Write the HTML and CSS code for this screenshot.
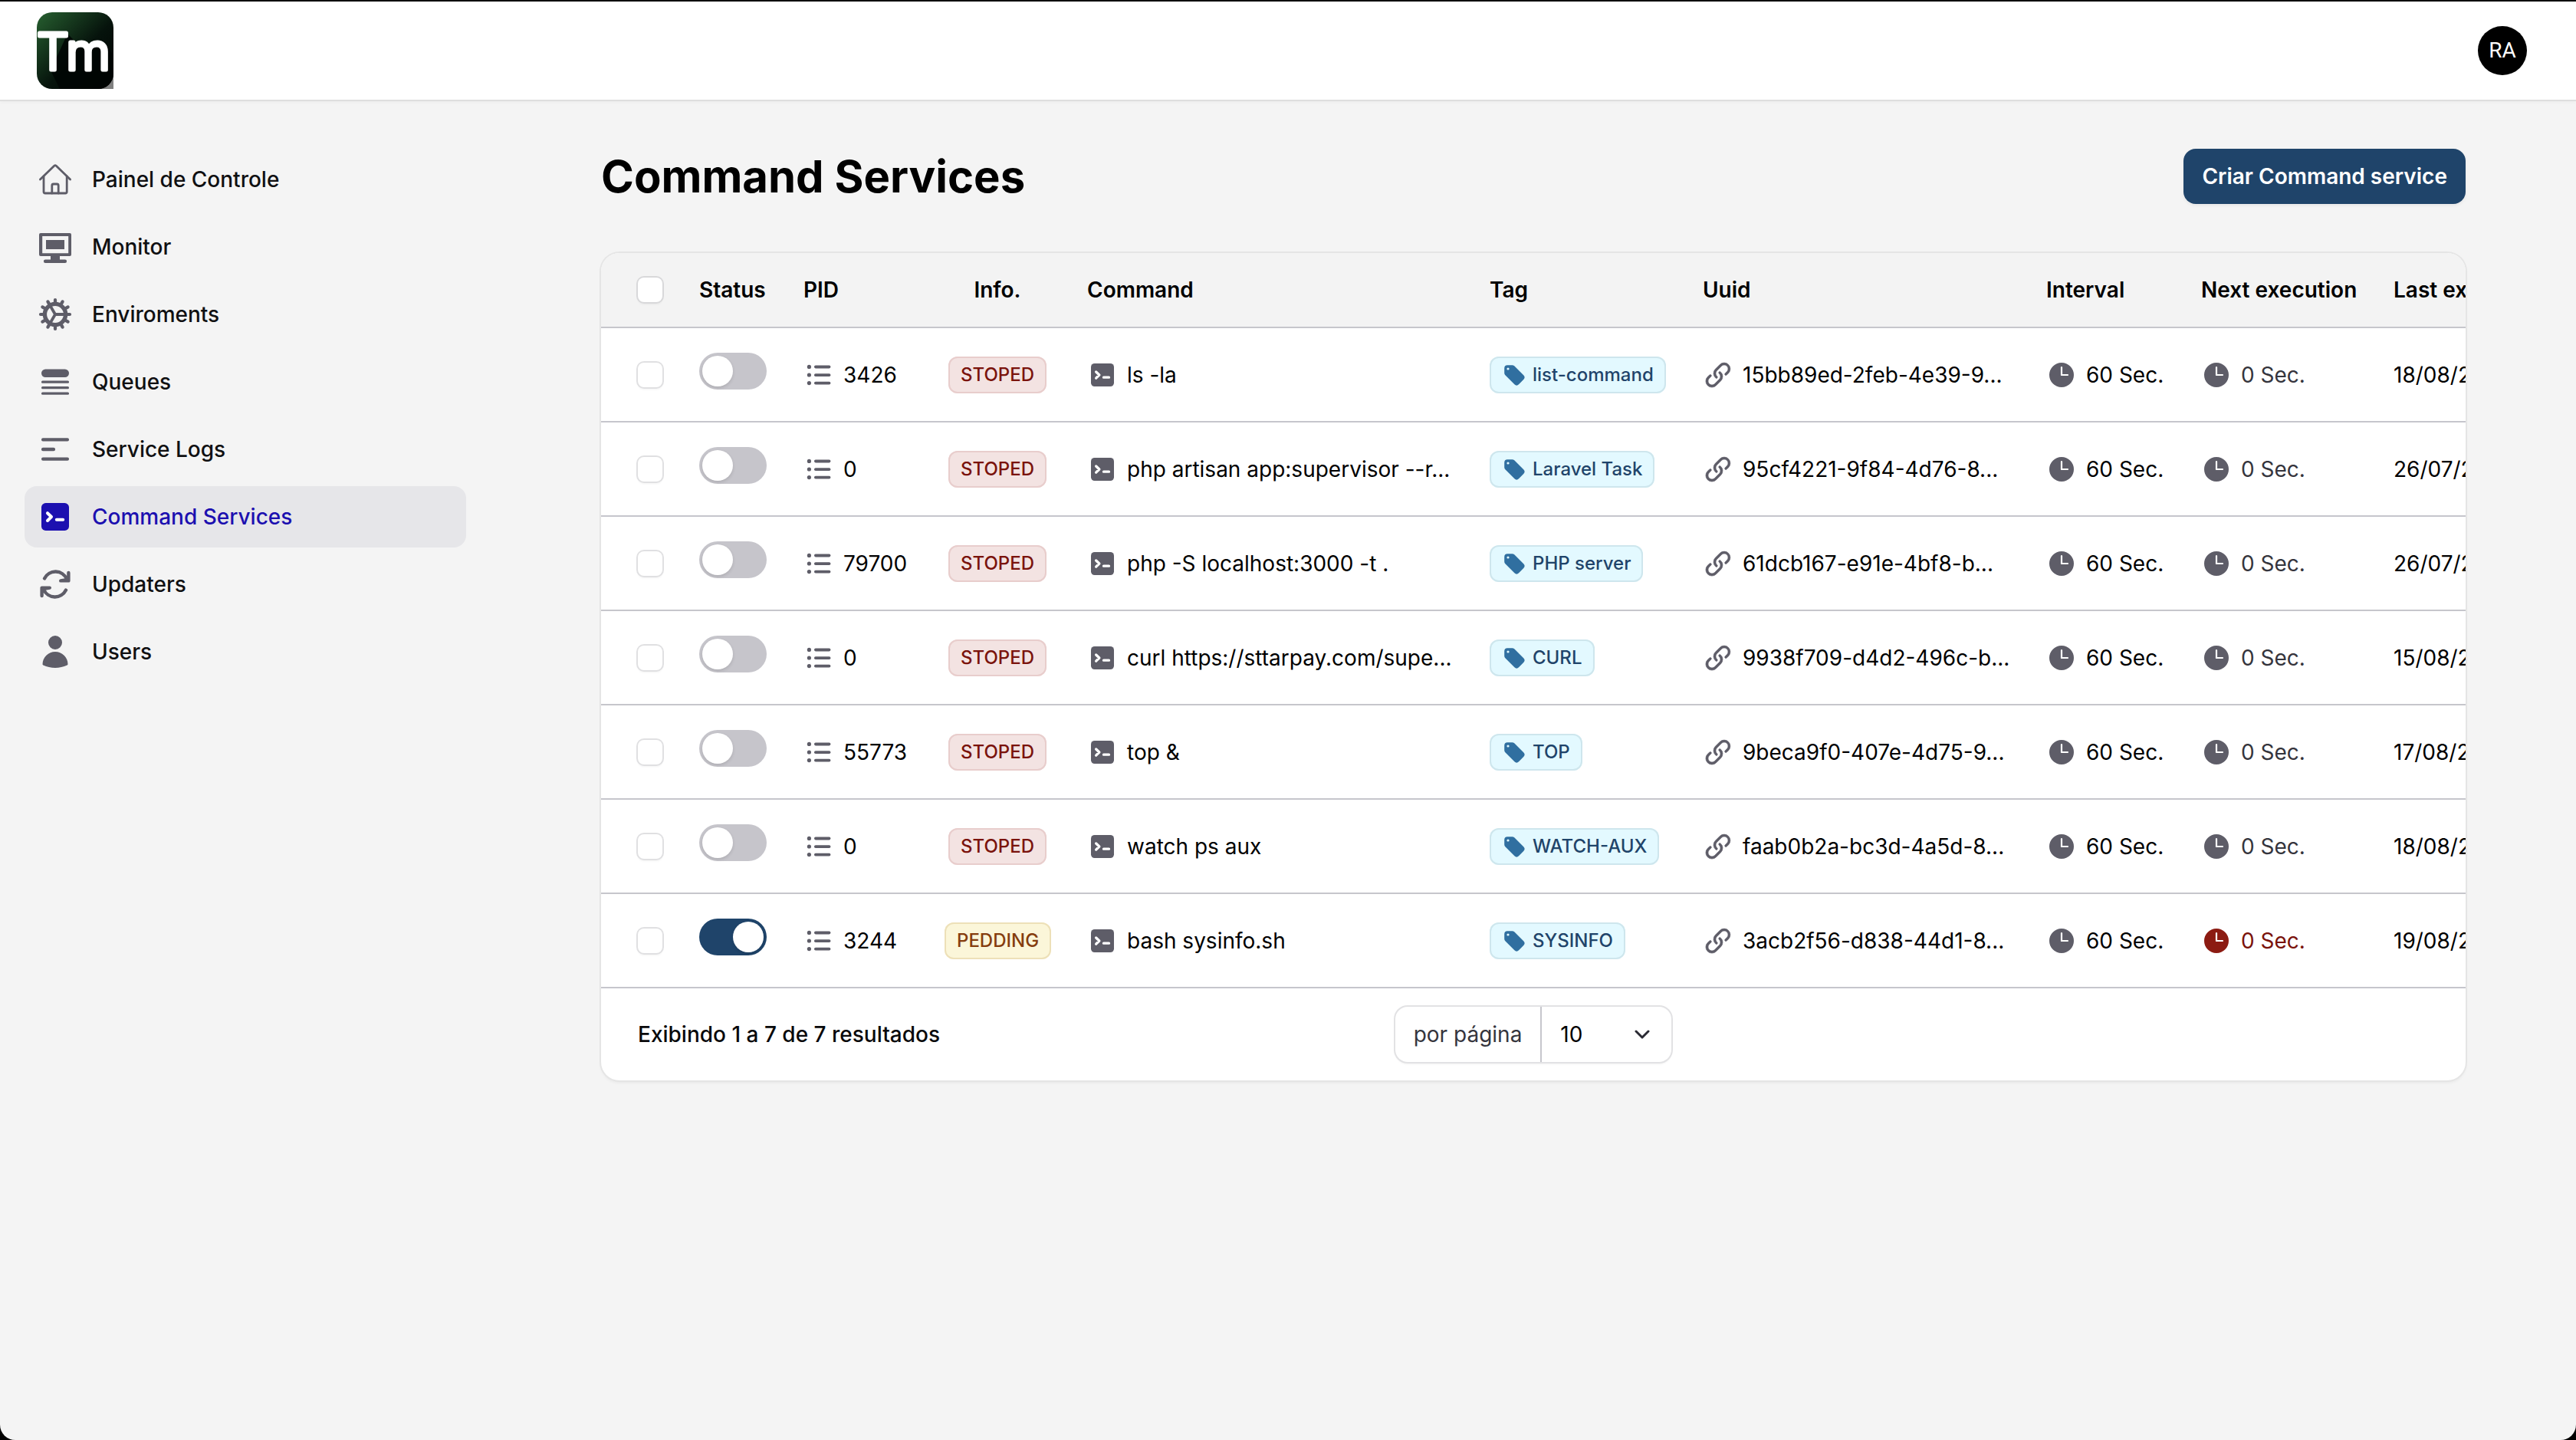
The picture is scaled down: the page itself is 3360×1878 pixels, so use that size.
FILE: index.html
```html
<!DOCTYPE html>
<html lang="pt-BR">
<head>
<meta charset="utf-8">
<meta name="viewport" content="width=device-width, initial-scale=1">
<title>Command Services</title>
<link rel="stylesheet" href="styles.css">
</head>
<body>
<svg class="sprite" aria-hidden="true">
  <symbol id="i-home" viewBox="0 0 24 24"><g fill="none" stroke="currentColor" stroke-width="1.4" stroke-linecap="round" stroke-linejoin="round"><path d="M2.2 12 11.5 3a.8.8 0 0 1 1 0L21.800 12"/><path d="M4.500 10v10a1 1 0 0 0 1 1h13.100a1 1 0 0 0 1-1V10"/><path d="M9.900 21v-5a1 1 0 0 1 1-1h2.200a1 1 0 0 1 1 1v5"/></g></symbol>
  <symbol id="i-monitor" viewBox="0 0 24 24"><path fill="currentColor" fill-rule="evenodd" d="M2.500 3h19a1 1 0 0 1 1 1v13a1 1 0 0 1-1 1H15v2.200h3.400a1.150 1.150 0 0 1 0 2.300H5.600a1.150 1.150 0 0 1 0-2.300H9V18H2.500a1 1 0 0 1-1-1V4a1 1 0 0 1 1-1Zm1.100 2v11.100h17V5Z"/><path fill="currentColor" d="M6 7.500h12v6H6z"/></symbol>
  <symbol id="i-cog" viewBox="0 0 24 24"><g fill="none" stroke="currentColor" stroke-linecap="round"><circle cx="12" cy="12" r="6.800" stroke-width="2.700"/><path stroke-width="1.900" d="M12 12h6M12 12 9 6.800M12 12l-3 5.200"/><path stroke-width="2.100" d="M12 2.500V5M12 19v2.500M2.500 12H5M19 12h2.500M7.200 3.690 8.500 5.940M15.500 18.060l1.300 2.250M3.690 7.200 5.940 8.500M18.060 15.500l2.250 1.300M16.800 3.690 15.500 5.940M8.500 18.060l-1.300 2.250M20.310 7.200 18.060 8.500M5.940 15.500 3.690 16.800"/></g></symbol>
  <symbol id="i-queue" viewBox="0 0 24 24"><g fill="currentColor"><rect x="3" y="3.750" width="18" height="5.250" rx="2.625"/><rect x="3" y="11.250" width="18" height="1.600" rx=".75"/><rect x="3" y="15" width="18" height="1.600" rx=".75"/><rect x="3" y="18.750" width="18" height="1.600" rx=".75"/></g></symbol>
  <symbol id="i-logs" viewBox="0 0 24 24"><g fill="currentColor"><rect x="3" y="4.600" width="18" height="2.200" rx="1"/><rect x="3" y="10.900" width="9" height="2.200" rx="1"/><rect x="3" y="17.200" width="18" height="2.200" rx="1"/></g></symbol>
  <symbol id="i-command" viewBox="0 0 24 24"><rect x="3" y="3" width="18" height="18" rx="2.800" fill="currentColor"/><path fill="none" stroke="#fff" stroke-width="2" stroke-linecap="round" stroke-linejoin="round" d="M7 9.600 9.500 12 7 14.500M12.900 13.900h4.200"/></symbol>
  <symbol id="i-refresh" viewBox="0 0 24 24"><path fill="none" stroke="currentColor" stroke-width="2.200" stroke-linecap="round" stroke-linejoin="round" d="M5 8.200A8 8 0 0 1 19.500 8.600M20.700 4.500v5.200h-5.100L20 9M19 15.800A8 8 0 0 1 4.500 15.400M3.300 19.500v-5.200h5.100L4 15"/></symbol>
  <symbol id="i-user" viewBox="0 0 24 24"><path fill="currentColor" d="M7.500 6a4.500 4.500 0 1 1 9 0 4.500 4.500 0 0 1-9 0ZM3.751 20.105a8.250 8.250 0 0 1 16.498 0 .75.75 0 0 1-.437.695A18.683 18.683 0 0 1 12 22.500c-2.786 0-5.433-.608-7.812-1.700a.75.75 0 0 1-.437-.695Z"/></symbol>
  <symbol id="i-list" viewBox="0 0 20 20"><g fill="currentColor"><circle cx="3.700" cy="4.700" r="1.300"/><circle cx="3.700" cy="10" r="1.300"/><circle cx="3.700" cy="15.300" r="1.300"/><rect x="7" y="3.800" width="10.700" height="1.900" rx=".9"/><rect x="7" y="9.100" width="10.700" height="1.900" rx=".9"/><rect x="7" y="14.400" width="10.700" height="1.900" rx=".9"/></g></symbol>
  <symbol id="i-tag" viewBox="0 0 20 20"><path fill="currentColor" fill-rule="evenodd" d="M4.500 2A2.500 2.500 0 0 0 2 4.500v3.879a2.500 2.500 0 0 0 .732 1.767l7.500 7.500a2.500 2.500 0 0 0 3.536 0l3.878-3.878a2.500 2.500 0 0 0 0-3.536l-7.500-7.500A2.500 2.500 0 0 0 8.380 2H4.500ZM5 6a1 1 0 1 0 0-2 1 1 0 0 0 0 2Z"/></symbol>
  <symbol id="i-link" viewBox="0 0 20 20"><path fill="currentColor" stroke="currentColor" stroke-width=".3" d="M12.232 4.232a2.500 2.500 0 0 1 3.536 3.536l-1.225 1.224a.75.75 0 0 0 1.061 1.060l1.224-1.224a4 4 0 0 0-5.656-5.656l-3 3a4 4 0 0 0 .225 5.865.75.75 0 0 0 .977-1.138 2.500 2.500 0 0 1-.142-3.667l3-3ZM11.603 7.963a.75.75 0 0 0-.977 1.138 2.500 2.500 0 0 1 .142 3.667l-3 3a2.500 2.500 0 0 1-3.536-3.536l1.225-1.224a.75.75 0 0 0-1.061-1.060l-1.224 1.224a4 4 0 1 0 5.656 5.656l3-3a4 4 0 0 0-.225-5.865Z"/></symbol>
  <symbol id="i-clock" viewBox="0 0 20 20"><path fill="currentColor" fill-rule="evenodd" d="M10 18a8 8 0 1 0 0-16 8 8 0 0 0 0 16Zm.55-13a.55.55 0 0 0-1.100 0v5c0 .414.136.55.55.55h4a.55.55 0 0 0 0-1.100h-3.450V5Z"/></symbol>
</svg>

<header class="topbar">
  <a class="brand" href="#" aria-label="Tm">
    <svg class="logo" viewBox="0 0 100 100">
      <defs><linearGradient id="g-logo" x1="0" y1="0" x2="1" y2="1"><stop offset="0" stop-color="#276030"/><stop offset=".55" stop-color="#06130c"/><stop offset="1" stop-color="#000"/></linearGradient><clipPath id="c-logo"><rect width="100" height="100" rx="20"/></clipPath></defs>
      <path fill="#808080" d="M80 100h20V80z"/>
      <g clip-path="url(#c-logo)"><rect width="100" height="100" fill="url(#g-logo)"/><path fill="#000503" opacity=".85" d="M18 76 30 100H100V56L90 42 60 48 40 28z"/></g>
      <text class="logo-text" x="0" y="75">Tm</text>
    </svg>
  </a>
  <button class="avatar" type="button">RA</button>
</header>

<div class="layout">
  <nav class="sidebar" aria-label="Menu">
    <a class="nav-item" href="#"><svg class="nav-icon"><use href="#i-home"/></svg>Painel de Controle</a>
    <a class="nav-item" href="#"><svg class="nav-icon"><use href="#i-monitor"/></svg>Monitor</a>
    <a class="nav-item" href="#"><svg class="nav-icon"><use href="#i-cog"/></svg>Enviroments</a>
    <a class="nav-item" href="#"><svg class="nav-icon"><use href="#i-queue"/></svg>Queues</a>
    <a class="nav-item" href="#"><svg class="nav-icon"><use href="#i-logs"/></svg>Service Logs</a>
    <a class="nav-item active" href="#" aria-current="page"><svg class="nav-icon"><use href="#i-command"/></svg>Command Services</a>
    <a class="nav-item" href="#"><svg class="nav-icon"><use href="#i-refresh"/></svg>Updaters</a>
    <a class="nav-item" href="#"><svg class="nav-icon"><use href="#i-user"/></svg>Users</a>
  </nav>

  <main class="main">
    <div class="page-head">
      <h1>Command Services</h1>
      <button class="create" type="button">Criar Command service</button>
    </div>

    <section class="card">
      <div class="scroller">
        <table>
          <colgroup><col class="c-check"><col class="c-status"><col class="c-pid"><col class="c-info"><col class="c-command"><col class="c-tag"><col class="c-uuid"><col class="c-interval"><col class="c-next"><col class="c-last"></colgroup>
          <thead>
            <tr><th class="first"><input class="check" type="checkbox" aria-label="Selecionar todos"></th><th>Status</th><th>PID</th><th class="center">Info.</th><th>Command</th><th>Tag</th><th>Uuid</th><th>Interval</th><th>Next execution</th><th>Last execution</th></tr>
          </thead>
          <tbody>
            <tr><td class="first"><input class="check" type="checkbox" aria-label="Selecionar 3426"></td><td><input class="toggle" type="checkbox" role="switch" aria-label="Status"></td><td><span class="cell"><svg class="icon"><use href="#i-list"/></svg>3426</span></td><td class="center"><span class="badge danger">STOPED</span></td><td><span class="cell"><svg class="icon"><use href="#i-command"/></svg>ls -la</span></td><td><span class="badge info"><svg class="tag-icon"><use href="#i-tag"/></svg>list-command</span></td><td><span class="cell"><svg class="icon"><use href="#i-link"/></svg>15bb89ed-2feb-4e39-9...</span></td><td><span class="cell"><svg class="icon"><use href="#i-clock"/></svg>60 Sec.</span></td><td><span class="cell muted"><svg class="icon"><use href="#i-clock"/></svg>0 Sec.</span></td><td>18/08/2024</td></tr>
            <tr><td class="first"><input class="check" type="checkbox" aria-label="Selecionar Laravel Task"></td><td><input class="toggle" type="checkbox" role="switch" aria-label="Status"></td><td><span class="cell"><svg class="icon"><use href="#i-list"/></svg>0</span></td><td class="center"><span class="badge danger">STOPED</span></td><td><span class="cell"><svg class="icon"><use href="#i-command"/></svg>php artisan app:supervisor --r...</span></td><td><span class="badge info"><svg class="tag-icon"><use href="#i-tag"/></svg>Laravel Task</span></td><td><span class="cell"><svg class="icon"><use href="#i-link"/></svg>95cf4221-9f84-4d76-8...</span></td><td><span class="cell"><svg class="icon"><use href="#i-clock"/></svg>60 Sec.</span></td><td><span class="cell muted"><svg class="icon"><use href="#i-clock"/></svg>0 Sec.</span></td><td>26/07/2024</td></tr>
            <tr><td class="first"><input class="check" type="checkbox" aria-label="Selecionar PHP server"></td><td><input class="toggle" type="checkbox" role="switch" aria-label="Status"></td><td><span class="cell"><svg class="icon"><use href="#i-list"/></svg>79700</span></td><td class="center"><span class="badge danger">STOPED</span></td><td><span class="cell"><svg class="icon"><use href="#i-command"/></svg>php -S localhost:3000 -t .</span></td><td><span class="badge info"><svg class="tag-icon"><use href="#i-tag"/></svg>PHP server</span></td><td><span class="cell"><svg class="icon"><use href="#i-link"/></svg>61dcb167-e91e-4bf8-b...</span></td><td><span class="cell"><svg class="icon"><use href="#i-clock"/></svg>60 Sec.</span></td><td><span class="cell muted"><svg class="icon"><use href="#i-clock"/></svg>0 Sec.</span></td><td>26/07/2024</td></tr>
            <tr><td class="first"><input class="check" type="checkbox" aria-label="Selecionar CURL"></td><td><input class="toggle" type="checkbox" role="switch" aria-label="Status"></td><td><span class="cell"><svg class="icon"><use href="#i-list"/></svg>0</span></td><td class="center"><span class="badge danger">STOPED</span></td><td><span class="cell"><svg class="icon"><use href="#i-command"/></svg>curl https://sttarpay.com/supe...</span></td><td><span class="badge info"><svg class="tag-icon"><use href="#i-tag"/></svg>CURL</span></td><td><span class="cell"><svg class="icon"><use href="#i-link"/></svg>9938f709-d4d2-496c-b...</span></td><td><span class="cell"><svg class="icon"><use href="#i-clock"/></svg>60 Sec.</span></td><td><span class="cell muted"><svg class="icon"><use href="#i-clock"/></svg>0 Sec.</span></td><td>15/08/2024</td></tr>
            <tr><td class="first"><input class="check" type="checkbox" aria-label="Selecionar TOP"></td><td><input class="toggle" type="checkbox" role="switch" aria-label="Status"></td><td><span class="cell"><svg class="icon"><use href="#i-list"/></svg>55773</span></td><td class="center"><span class="badge danger">STOPED</span></td><td><span class="cell"><svg class="icon"><use href="#i-command"/></svg>top &amp;</span></td><td><span class="badge info"><svg class="tag-icon"><use href="#i-tag"/></svg>TOP</span></td><td><span class="cell"><svg class="icon"><use href="#i-link"/></svg>9beca9f0-407e-4d75-9...</span></td><td><span class="cell"><svg class="icon"><use href="#i-clock"/></svg>60 Sec.</span></td><td><span class="cell muted"><svg class="icon"><use href="#i-clock"/></svg>0 Sec.</span></td><td>17/08/2024</td></tr>
            <tr><td class="first"><input class="check" type="checkbox" aria-label="Selecionar WATCH-AUX"></td><td><input class="toggle" type="checkbox" role="switch" aria-label="Status"></td><td><span class="cell"><svg class="icon"><use href="#i-list"/></svg>0</span></td><td class="center"><span class="badge danger">STOPED</span></td><td><span class="cell"><svg class="icon"><use href="#i-command"/></svg>watch ps aux</span></td><td><span class="badge info"><svg class="tag-icon"><use href="#i-tag"/></svg>WATCH-AUX</span></td><td><span class="cell"><svg class="icon"><use href="#i-link"/></svg>faab0b2a-bc3d-4a5d-8...</span></td><td><span class="cell"><svg class="icon"><use href="#i-clock"/></svg>60 Sec.</span></td><td><span class="cell muted"><svg class="icon"><use href="#i-clock"/></svg>0 Sec.</span></td><td>18/08/2024</td></tr>
            <tr><td class="first"><input class="check" type="checkbox" aria-label="Selecionar SYSINFO"></td><td><input class="toggle" type="checkbox" role="switch" aria-label="Status" checked></td><td><span class="cell"><svg class="icon"><use href="#i-list"/></svg>3244</span></td><td class="center"><span class="badge warning">PEDDING</span></td><td><span class="cell"><svg class="icon"><use href="#i-command"/></svg>bash sysinfo.sh</span></td><td><span class="badge info"><svg class="tag-icon"><use href="#i-tag"/></svg>SYSINFO</span></td><td><span class="cell"><svg class="icon"><use href="#i-link"/></svg>3acb2f56-d838-44d1-8...</span></td><td><span class="cell"><svg class="icon"><use href="#i-clock"/></svg>60 Sec.</span></td><td><span class="cell late"><svg class="icon"><use href="#i-clock"/></svg>0 Sec.</span></td><td>19/08/2024</td></tr>
          </tbody>
        </table>
      </div>
      <footer class="pager">
        <span class="count">Exibindo 1 a 7 de 7 resultados</span>
        <div class="per-page">
          <label for="per-page">por página</label>
          <span class="select-wrap">
            <select id="per-page"><option>5</option><option selected>10</option><option>25</option><option>50</option></select>
            <svg class="chevron" viewBox="0 0 20 12"><path fill="none" stroke="currentColor" stroke-width="3" stroke-linecap="round" stroke-linejoin="round" d="m2 2 8 8 8-8"/></svg>
          </span>
        </div>
      </footer>
    </section>
  </main>
</div>
</body>
</html>
```
FILE: styles.css
```css
* { box-sizing: border-box; }

html { background: #000; }

body {
  margin: 0;
  min-height: 100vh;
  border-top: 2px solid #0b0b0b;
  border-radius: 0 0 20px 20px;
  background: #f4f4f4;
  color: #09090b;
  font: 400 28px/40px Inter, "Liberation Sans", sans-serif;
}

button, select, input { font: inherit; margin: 0; }

.sprite { display: none; }

.topbar {
  display: flex;
  align-items: center;
  justify-content: space-between;
  height: 128px;
  padding: 0 64px 0 48px;
  background: #fff;
  box-shadow: 0 2px 0 #dedede, 0 4px 4px rgba(0, 0, 0, .03);
}

.brand, .logo { display: block; }
.logo { width: 100px; height: 100px; }
.logo-text {
  font: 300 66px Inter, sans-serif;
  fill: #fff;
  stroke: #fff;
  stroke-width: 5px;
  stroke-linejoin: round;
}

.avatar {
  width: 64px;
  height: 64px;
  padding: 0;
  border: 0;
  border-radius: 50%;
  background: #000;
  color: #fff;
  font-family: Roboto, sans-serif;
}

.layout { display: flex; align-items: flex-start; }

.sidebar {
  display: flex;
  flex: none;
  flex-direction: column;
  gap: 8px;
  width: 640px;
  padding: 64px 32px;
}

.nav-item {
  display: flex;
  align-items: center;
  gap: 24px;
  padding: 16px;
  height: 80px;
  border-radius: 16px;
  color: #101012;
  font-weight: 500;
  text-decoration: none;
}
.nav-icon { flex: none; width: 48px; height: 48px; color: #5e5d68; }
.nav-item.active { background: #e6e6e9; color: #1c10b0; }
.nav-item.active .nav-icon { color: #1c10b0; }

.main {
  flex: 1;
  min-width: 0;
  max-width: 2560px;
  margin: 0 auto;
  padding: 64px;
}

.page-head {
  display: flex;
  align-items: center;
  justify-content: space-between;
  margin-bottom: 64px;
}
h1 { margin: 0; color: #000; font-size: 58px; line-height: 72px; font-weight: 700; }

.create {
  height: 72px;
  padding: 0 24px;
  border: 0;
  border-radius: 16px;
  background: #1f446a;
  color: #fff;
  font-weight: 600;
  box-shadow: 0 2px 4px rgba(0, 0, 0, .06);
}

.card {
  border-radius: 24px;
  background: #fff;
  box-shadow: 0 0 0 2px #e5e5e5, 0 3px 4px rgba(0, 0, 0, .06);
  overflow: hidden;
}
.scroller { overflow: hidden; }

table { width: 2600px; table-layout: fixed; border-collapse: separate; border-spacing: 0; color: #000; }
.c-check { width: 104px; }
.c-status { width: 136px; }
.c-pid { width: 184px; }
.c-info { width: 186px; }
.c-command { width: 525px; }
.c-tag { width: 278px; }
.c-uuid { width: 448px; }
.c-interval { width: 202px; }
.c-next { width: 251px; }

th, td {
  padding: 0 24px;
  border-bottom: 2px solid #c6c6cc;
  text-align: left;
  vertical-align: middle;
  white-space: nowrap;
}
th { height: 98px; background: #f3f3f3; font-weight: 600; }
td { height: 123px; }
.first { padding: 0 24px 0 48px; }
.center { text-align: center; }

.check {
  appearance: none;
  display: block;
  width: 32px;
  height: 32px;
  border-radius: 8px;
  background: #fff;
  box-shadow: 0 0 0 2px #e0e0e2, 0 3px 3px rgba(0, 0, 0, .05);
}
th .check { box-shadow: 0 0 0 2px #d8d8da, 0 3px 3px rgba(0, 0, 0, .05); }

.toggle {
  appearance: none;
  display: flex;
  width: 88px;
  height: 48px;
  margin-bottom: 10px;
  padding: 4px;
  border-radius: 24px;
  background: #c6c5cb;
}
.toggle::before {
  content: "";
  width: 40px;
  height: 40px;
  border-radius: 50%;
  background: #fff;
  box-shadow: 0 2px 4px rgba(0, 0, 0, .12);
}
.toggle:checked { justify-content: flex-end; background: #1f446a; }

.cell { display: flex; align-items: center; gap: 12px; }
.icon { flex: none; width: 40px; height: 40px; color: #5e5d68; }
.muted { color: #35353d; }
.late { color: #7a130c; }
.late .icon { color: #8c1b12; }

.badge {
  display: inline-flex;
  align-items: center;
  gap: 8px;
  height: 48px;
  padding: 0 16px;
  border-radius: 12px;
  font-size: 24px;
  line-height: 32px;
  font-weight: 500;
  vertical-align: middle;
}
.danger { background: #f3e3e2; color: #7a130c; box-shadow: inset 0 0 0 2px #e8cdcc; }
.warning { background: #fbf6d9; color: #853d0e; box-shadow: inset 0 0 0 2px #ede0b8; }
.info { background: #e3f9ff; color: #1f446a; box-shadow: inset 0 0 0 2px #cee6ed; }
.tag-icon { flex: none; width: 32px; height: 32px; color: #306fa0; }

.pager {
  display: grid;
  grid-template-columns: 1fr auto 1fr;
  align-items: center;
  padding: 24px 48px;
}
.count { font-weight: 500; }

.per-page {
  display: flex;
  align-items: center;
  height: 72px;
  border-radius: 16px;
  box-shadow: 0 0 0 2px #e2e2e4, 0 3px 3px rgba(0, 0, 0, .05);
}
.per-page label { padding: 0 24px; color: #35353d; }
.select-wrap {
  display: grid;
  align-items: center;
  width: 171px;
  height: 72px;
  border-left: 2px solid #c6c6cc;
}
.select-wrap > * { grid-area: 1 / 1; }
select {
  appearance: none;
  width: 100%;
  height: 72px;
  padding: 0 24px;
  border: 0;
  background: transparent;
  color: #000;
}
.chevron { justify-self: end; width: 20px; height: 12px; margin-right: 28px; color: #2a2a33; pointer-events: none; }
```
